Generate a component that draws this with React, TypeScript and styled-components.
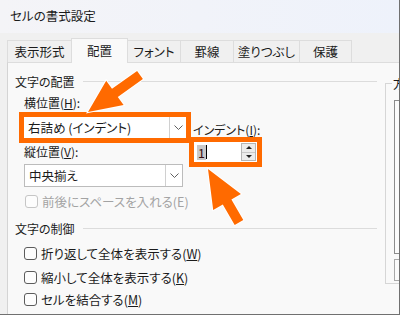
import React from 'react';
import styled, { createGlobalStyle } from 'styled-components';

const GlobalStyle = createGlobalStyle`
  html, body {
    margin: 0;
    padding: 0;
    background: #f0f0f0;
  }
  * {
    box-sizing: border-box;
  }
`;

const ORANGE = '#ff6a00';

const Window = styled.div`
  position: relative;
  width: 400px;
  height: 315px;
  overflow: hidden;
  display: flex;
  flex-direction: column;
  background: #f0f0f0;
  border-right: 1px solid #707070;
  border-bottom: 1px solid #707070;
  font-family: "Noto Sans CJK JP", "Noto Sans", sans-serif;
  font-feature-settings: "palt";
  font-size: 12px;
  color: #1b1b1b;
`;

const TitleBar = styled.div`
  height: 33px;
  flex: none;
  display: flex;
  align-items: center;
  padding: 0 0 2px 10px;
  background: linear-gradient(90deg, #f4f4f7, #eef2fb);
  font-size: 12.5px;
`;

const TabStrip = styled.div`
  height: 29px;
  flex: none;
  display: flex;
  align-items: flex-end;
  padding-left: 7px;
  position: relative;
  z-index: 1;
`;

const Tab = styled.div<{ $w: number; $active?: boolean }>`
  width: ${p => p.$w}px;
  height: ${p => (p.$active ? 25 : 22)}px;
  margin-bottom: ${p => (p.$active ? -1 : 0)}px;
  display: flex;
  align-items: center;
  justify-content: center;
  padding-bottom: ${p => (p.$active ? 2 : 0)}px;
  background: ${p => (p.$active ? '#f9f9f9' : '#f0f0f0')};
  border: 1px solid #dddddd;
  border-bottom: none;
  margin-right: -1px;
  font-size: 12.5px;
`;

const Panel = styled.div`
  flex: 1;
  display: flex;
  gap: 8px;
  margin-left: 7px;
  background: #f9f9f9;
  border-left: 1px solid #d4d4d4;
  border-top: 1px solid #dddddd;
  overflow: hidden;
`;

const LeftColumn = styled.div`
  width: 369px;
  flex: none;
  display: flex;
  flex-direction: column;
`;

const SectionHeader = styled.div<{ $top: number }>`
  margin-top: ${p => p.$top}px;
  height: 16px;
  display: flex;
  align-items: center;
  gap: 8px;
  padding-left: 7px;

  &::after {
    content: "";
    flex: 1;
    height: 1px;
    background: #dcdcdc;
  }
`;

const AlignGrid = styled.div`
  display: grid;
  grid-template-columns: 165px auto;
  padding-left: 16px;
  margin-top: 6px;
`;

const Stack = styled.div`
  display: flex;
  flex-direction: column;
  align-items: flex-start;
`;

const FieldLabel = styled.div<{ $top?: number; $indent?: number }>`
  height: 16px;
  line-height: 16px;
  margin-top: ${p => p.$top ?? 0}px;
  padding-left: ${p => p.$indent ?? 0}px;
  white-space: nowrap;
`;

const Highlight = styled.div<{ $top: number; $shift?: number }>`
  border: 5px solid ${ORANGE};
  margin-top: ${p => p.$top}px;
  margin-left: ${p => p.$shift ?? 0}px;
`;

const Select = styled.div<{ $w: number; $h: number; $bordered?: boolean }>`
  width: ${p => p.$w}px;
  height: ${p => p.$h}px;
  margin-top: ${p => (p.$bordered ? 4 : 0)}px;
  display: flex;
  align-items: stretch;
  background: #ffffff;
  border: ${p => (p.$bordered ? '1px solid #bcbcbc' : 'none')};
  font-size: 12.5px;
`;

const SelectText = styled.div`
  flex: 1;
  display: flex;
  align-items: center;
  padding-left: 4px;
  white-space: nowrap;
`;

const SelectButton = styled.div`
  width: 17px;
  display: flex;
  align-items: center;
  justify-content: center;
  border-left: 1px solid #d0d0d0;
`;

const SpinBox = styled.div`
  width: 63px;
  height: 20px;
  display: flex;
  align-items: center;
  background: #ffffff;
  padding-left: 3px;
`;

const SpinValue = styled.span`
  background: #c9c9c9;
  color: #3a1010;
  line-height: 15px;
  padding: 0 1px;
  font-size: 12.5px;
`;

const Caret = styled.span`
  width: 1px;
  height: 14px;
  background: #000;
`;

const SpinButtons = styled.div`
  margin-left: auto;
  margin-right: 1px;
  width: 15px;
  height: 18px;
  display: flex;
  flex-direction: column;
  border: 1px solid #b5b5b5;
`;

const SpinButton = styled.div<{ $down?: boolean }>`
  flex: 1;
  display: flex;
  align-items: center;
  justify-content: center;
  background: #ececec;
  border-top: ${p => (p.$down ? '1px solid #c8c8c8' : 'none')};

  &::before {
    content: "";
    border-left: 3px solid transparent;
    border-right: 3px solid transparent;
    ${p => (p.$down ? 'border-top: 3px solid #222;' : 'border-bottom: 3px solid #222;')}
  }
`;

const CheckRow = styled.label<{ $top: number; $disabled?: boolean; $pad?: number }>`
  display: flex;
  align-items: center;
  gap: 4px;
  height: 16px;
  margin-top: ${p => p.$top}px;
  padding-left: ${p => p.$pad ?? 16}px;
  color: ${p => (p.$disabled ? '#a3a3a3' : '#1b1b1b')};
  white-space: nowrap;
  font-size: 12.5px;
`;

const Box = styled.span<{ $disabled?: boolean }>`
  width: 13px;
  height: 13px;
  border-radius: 3px;
  border: 1px solid ${p => (p.$disabled ? '#c6c6c6' : '#5c5c5c')};
  background: #fdfdfd;
  flex: none;
`;

const Group = styled.fieldset`
  margin: 11px 0 0 0;
  padding: 0 0 0 8px;
  height: 210px;
  width: 60px;
  flex: none;
  border: 1px solid #d6d6d6;
  display: flex;
  flex-direction: column;
  gap: 5px;
`;

const Legend = styled.legend`
  padding: 0 1px;
  margin-left: -2px;
  font-size: 12.5px;
  white-space: nowrap;
`;

const OrientBox = styled.div<{ $h: number; $top?: number; $edge?: string }>`
  height: ${p => p.$h}px;
  margin-top: ${p => p.$top ?? 0}px;
  border: 1px solid ${p => p.$edge ?? '#8c8c8c'};
  border-right: none;
  background: #fbfbfb;
  flex: none;
`;

const Overlay = styled.svg`
  position: absolute;
  left: 0;
  top: 0;
  width: 400px;
  height: 315px;
  pointer-events: none;
  z-index: 10;
`;

const Chevron = () => (
  <svg width="9" height="5" viewBox="0 0 9 5">
    <path d="M0.5 0.5 L4.5 4.5 L8.5 0.5" fill="none" stroke="#606060" strokeWidth="1" />
  </svg>
);

const tabs: { label: string; w: number; active?: boolean }[] = [
  { label: '表示形式', w: 65 },
  { label: '配置', w: 57, active: true },
  { label: 'フォント', w: 54 },
  { label: '罫線', w: 54 },
  { label: '塗りつぶし', w: 67 },
  { label: '保護', w: 53 },
];

export default function App() {
  return (
    <>
      <GlobalStyle />
      <Window>
        <TitleBar>セルの書式設定</TitleBar>
        <TabStrip>
          {tabs.map(t => (
            <Tab key={t.label} $w={t.w} $active={t.active}>
              {t.label}
            </Tab>
          ))}
        </TabStrip>
        <Panel>
          <LeftColumn>
            <SectionHeader $top={10}>文字の配置</SectionHeader>
            <AlignGrid>
              <Stack>
                <FieldLabel>
                  横位置(<u>H</u>):
                </FieldLabel>
                <Highlight $top={1} $shift={-5}>
                  <Select $w={162} $h={21}>
                    <SelectText>右詰め (インデント)</SelectText>
                    <SelectButton>
                      <Chevron />
                    </SelectButton>
                  </Select>
                </Highlight>
                <FieldLabel $top={1}>
                  縦位置(<u>V</u>):
                </FieldLabel>
                <Select $w={159} $h={23} $bordered>
                  <SelectText>中央揃え</SelectText>
                  <SelectButton>
                    <Chevron />
                  </SelectButton>
                </Select>
                <CheckRow $top={6} $pad={1} $disabled>
                  <Box $disabled />
                  <span>前後にスペースを入れる(E)</span>
                </CheckRow>
              </Stack>
              <Stack>
                <FieldLabel $top={27} $indent={4}>
                  インデント(<u>I</u>):
                </FieldLabel>
                <Highlight $top={-1}>
                  <SpinBox>
                    <SpinValue>1</SpinValue>
                    <Caret />
                    <SpinButtons>
                      <SpinButton />
                      <SpinButton $down />
                    </SpinButtons>
                  </SpinBox>
                </Highlight>
              </Stack>
            </AlignGrid>
            <SectionHeader $top={11}>文字の制御</SectionHeader>
            <CheckRow $top={9}>
              <Box />
              <span>
                折り返して全体を表示する(<u>W</u>)
              </span>
            </CheckRow>
            <CheckRow $top={8}>
              <Box />
              <span>
                縮小して全体を表示する(<u>K</u>)
              </span>
            </CheckRow>
            <CheckRow $top={6}>
              <Box />
              <span>
                セルを結合する(<u>M</u>)
              </span>
            </CheckRow>
          </LeftColumn>
          <Group>
            <Legend>方向</Legend>
            <OrientBox $h={154} $top={7} />
            <OrientBox $h={22} $edge="#a8a8a8" />
          </Group>
        </Panel>
        <Overlay viewBox="0 0 400 315">
          <polygon
            points="88,112 123.6,105.1 117.8,97 142.9,79.1 137.1,70.9 112,88.8 106.2,80.7"
            fill={ORANGE}
            stroke="#ffffff"
            strokeWidth="2"
            strokeLinejoin="miter"
            paintOrder="stroke"
          />
          <polygon
            points="208,169 213.2,209.9 222.8,204.4 234.7,225 243.3,220 231.4,199.4 240.9,193.9"
            fill={ORANGE}
            stroke="#ffffff"
            strokeWidth="2"
            strokeLinejoin="miter"
            paintOrder="stroke"
          />
        </Overlay>
      </Window>
    </>
  );
}
